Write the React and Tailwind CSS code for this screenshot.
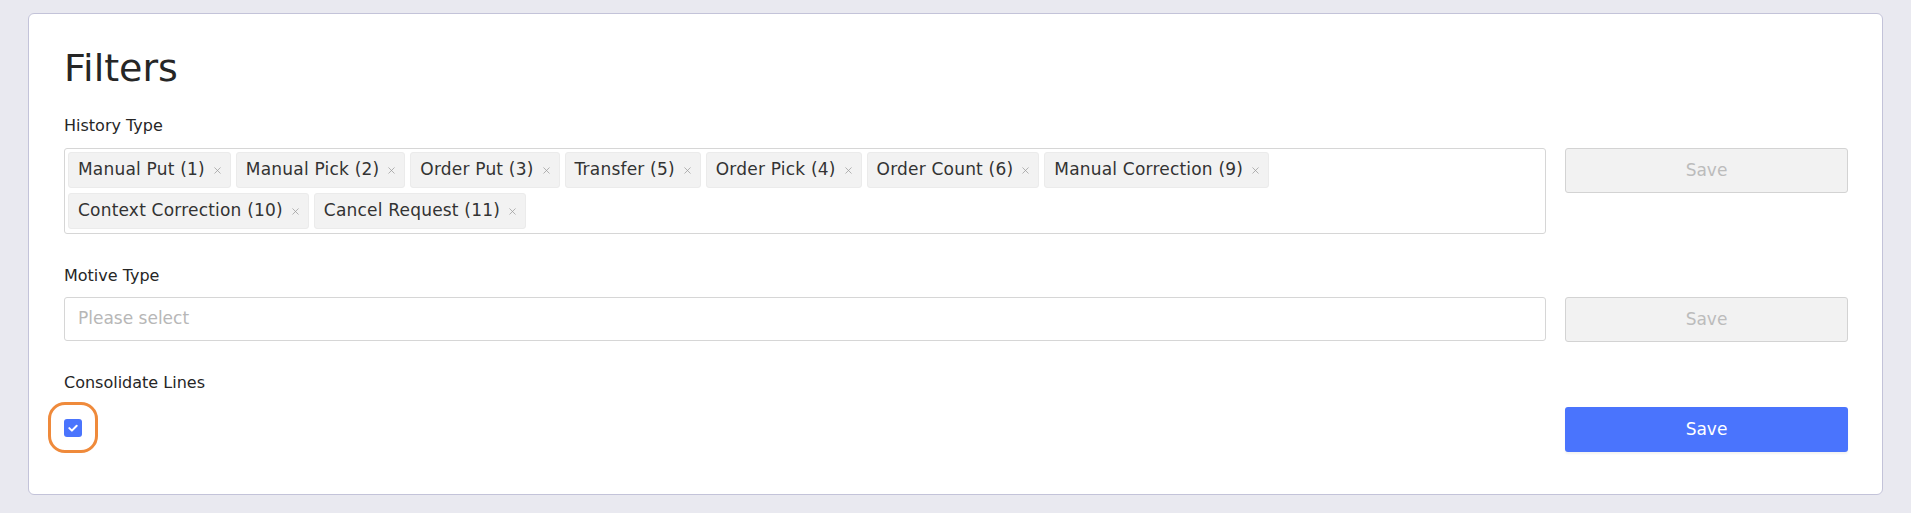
import { X } from 'lucide-react';

const historyTypes = [
    'Manual Put (1)',
    'Manual Pick (2)',
    'Order Put (3)',
    'Transfer (5)',
    'Order Pick (4)',
    'Order Count (6)',
    'Manual Correction (9)',
    'Context Correction (10)',
    'Cancel Request (11)',
];

function Chip({ label }) {
    return (
        <span className="flex h-[36px] items-center gap-[7px] rounded-[3px] border border-[#ebebeb] bg-[#f2f2f2] pl-[9px] pr-[7px] text-[17px] tracking-[0.2px] text-[#333333]">
            {label}
            <X className="h-[11px] w-[11px] text-[#9a9a9a]" strokeWidth={1.6} />
        </span>
    );
}

function SaveButton({ primary }) {
    return (
        <button
            className={`h-[45px] w-full rounded-[3px] text-[17px] ${primary
                ? 'bg-[#4a74fd] text-white shadow-[0_2px_2px_rgba(0,0,0,0.05)]'
                : 'border border-[#d3d3d3] bg-[#f2f2f2] text-[#bcbcbc]'
                }`}
        >
            Save
        </button>
    );
}

export default function App() {
    return (
        <div className="min-h-[513px] bg-[#e9e9f0] px-[28px] pt-[13px] font-['DejaVu_Sans',sans-serif]">
            <div className="rounded-[6px] border border-[#c3c3d9] bg-white pb-[41px] pl-[35px] pr-[34px] pt-[26px]">
                <h1 className="text-[38px] leading-[56px] text-[#262626]">Filters</h1>

                {/* History Type */}
                <p className="mt-[18px] text-[16px] leading-[24px] text-[#262626]">History Type</p>
                <div className="mt-[10px] flex items-start gap-[19px]">
                    <div className="flex min-h-[86px] flex-1 flex-wrap content-start gap-x-[5px] gap-y-[5px] rounded-[3px] border border-[#d6d6d6] py-[3px] pl-[3px] pr-[60px]">
                        {historyTypes.map((t) => (
                            <Chip key={t} label={t} />
                        ))}
                    </div>
                    <div className="w-[283px] shrink-0">
                        <SaveButton />
                    </div>
                </div>

                {/* Motive Type */}
                <p className="mt-[30px] text-[16px] leading-[24px] text-[#262626]">Motive Type</p>
                <div className="mt-[9px] flex items-start gap-[19px]">
                    <div className="flex h-[44px] flex-1 items-center rounded-[3px] border border-[#d6d6d6] px-[13px] text-[17px] text-[#b7b7b7]">
                        Please select
                    </div>
                    <div className="w-[283px] shrink-0">
                        <SaveButton />
                    </div>
                </div>

                {/* Consolidate Lines */}
                <p className="mt-[29px] text-[16px] leading-[24px] text-[#262626]">Consolidate Lines</p>
                <div className="mt-[-4px] flex items-start gap-[19px]">
                    <div className="flex-1">
                        <div className="relative ml-[-16px] mt-[11px] flex h-[51px] w-[50px] items-center justify-center rounded-[17px] border-[3px] border-[#ef8a3b]">
                            <span className="flex h-[18px] w-[18px] items-center justify-center rounded-[3px] bg-[#4a74fd]">
                                <svg viewBox="0 0 12 12" className="h-[12px] w-[12px]" fill="none">
                                    <path d="M2.3 6.1 L4.9 8.6 L9.7 3.7" stroke="white" strokeWidth="2" strokeLinecap="round" strokeLinejoin="round" />
                                </svg>
                            </span>
                        </div>
                    </div>
                    <div className="w-[283px] shrink-0 pt-[16px]">
                        <SaveButton primary />
                    </div>
                </div>
            </div>
        </div>
    );
}
